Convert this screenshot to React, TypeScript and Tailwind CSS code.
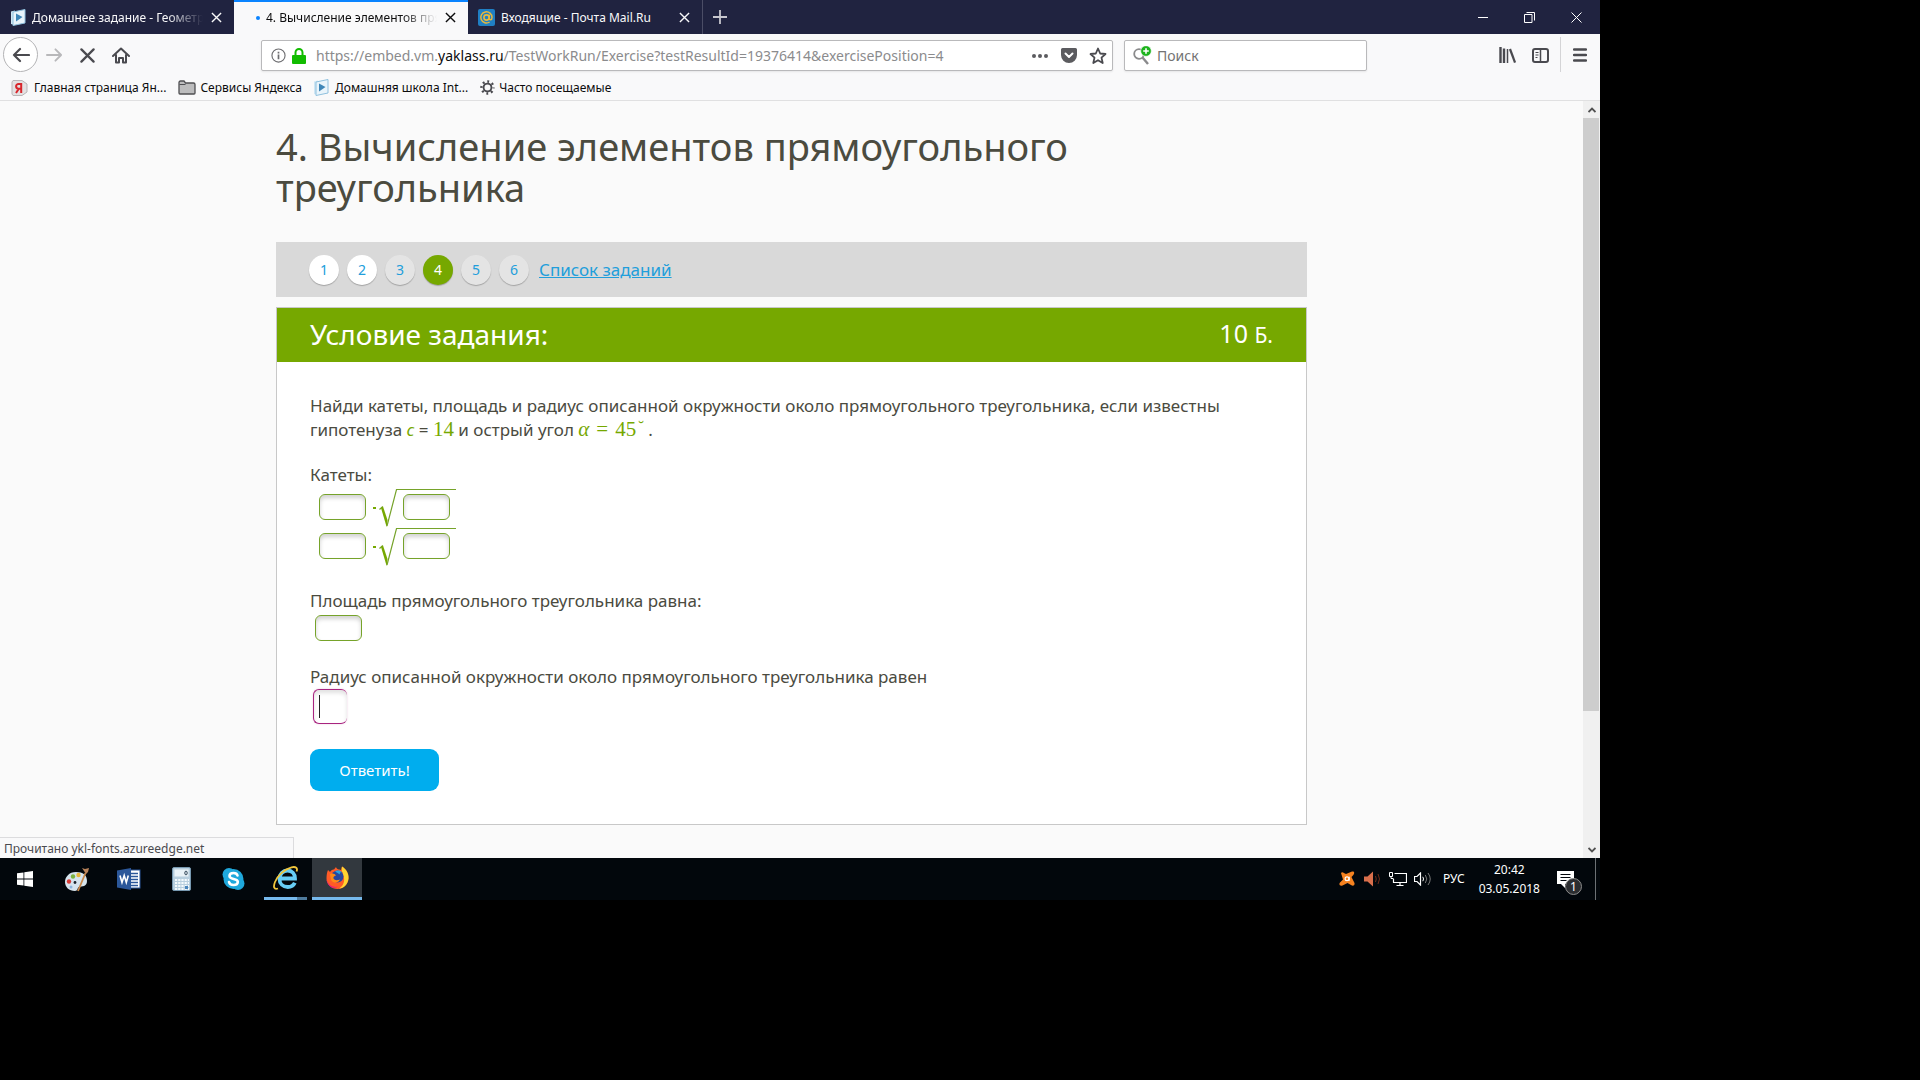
import type { ReactNode } from 'react';

function CloseIcon({ className }: { className: string }) {
  return (
    <svg viewBox="0 0 12 12" className={className} fill="none" stroke="currentColor" strokeWidth="1.5">
      <path d="M1 1 11 11M11 1 1 11" />
    </svg>
  );
}

function YaklassIcon() {
  return (
    <svg viewBox="0 0 16 17" className="h-[17px] w-4 shrink-0">
      <path d="M1 2.5 5 1.5V16L1 15Z" fill="#cfe6f4" />
      <path d="M3 3 15 .5V14L3 16.5Z" fill="#e9f4fb" stroke="#8fc0de" strokeWidth="1" />
      <path d="M6 4.5 12.5 8 6 12.5Z" fill="#3f86b8" />
    </svg>
  );
}

function MailIcon() {
  return (
    <svg viewBox="0 0 17 17" className="h-[17px] w-[17px] shrink-0">
      <rect width="17" height="17" rx="2" fill="#1f7fc4" />
      <circle cx="8.5" cy="8.5" r="2.6" fill="none" stroke="#e9b93c" strokeWidth="1.6" />
      <path d="M11.2 5.8v3.6c0 2 2.8 1.9 2.8-.9A5.6 5.6 0 1 0 11.6 13" fill="none" stroke="#e9b93c" strokeWidth="1.5" />
    </svg>
  );
}

function Tab({ title, icon, active, fade }: { title: string; icon: ReactNode; active?: boolean; fade?: boolean }) {
  return (
    <div
      className={
        active
          ? 'flex h-full w-[234px] shrink-0 items-center border-t-2 border-[#0a84ff] bg-[#f9f9fa] pr-[12px] pb-px pl-[22px] text-[#0c0c0d]'
          : 'flex h-full w-[234px] shrink-0 items-center pt-px pr-[12px] pl-[10px] text-[#f9f9fa]'
      }
    >
      {icon}
      <span
        className={
          fade
            ? 'ml-[6px] min-w-0 flex-1 overflow-hidden whitespace-nowrap [mask-image:linear-gradient(to_left,transparent,black_36px)]'
            : 'ml-[6px] min-w-0 flex-1 overflow-hidden whitespace-nowrap'
        }
      >
        {title}
      </span>
      <button aria-label="Закрыть вкладку" className="ml-[8px] p-0">
        <CloseIcon className="h-[11px] w-[11px]" />
      </button>
    </div>
  );
}

function TabStrip() {
  return (
    <div className="flex h-[34px] shrink-0 bg-[#202340] text-[12px]">
      <Tab title="Домашнее задание - Геометр" fade icon={<YaklassIcon />} />
      <Tab
        title="4. Вычисление элементов пря"
        active
        fade
        icon={<span className="h-1 w-1 shrink-0 rounded-full bg-[#0a84ff]" />}
      />
      <Tab title="Входящие - Почта Mail.Ru" icon={<MailIcon />} />
      <button aria-label="Новая вкладка" className="flex w-[35px] items-center justify-center border-l border-[#4b4d66] text-[#c7c7ce]">
        <svg viewBox="0 0 14 14" className="h-[14px] w-[14px]" stroke="currentColor" strokeWidth="1.8">
          <path d="M7 0v14M0 7h14" />
        </svg>
      </button>
      <div className="ml-auto flex text-white">
        <button aria-label="Свернуть" className="flex w-[47px] items-center justify-center">
          <span className="h-px w-[10px] bg-white" />
        </button>
        <button aria-label="Восстановить" className="flex w-[47px] items-center justify-center">
          <svg viewBox="0 0 11 11" className="h-[11px] w-[11px]" fill="none" stroke="currentColor">
            <path d="M.5 2.500h7.500v8h-7.500ZM2.500.5h8v8" />
          </svg>
        </button>
        <button aria-label="Закрыть" className="flex w-[47px] items-center justify-center">
          <svg viewBox="0 0 11 11" className="h-[11px] w-[11px]" fill="none" stroke="currentColor">
            <path d="M.5.5l10 10M10.500.5l-10 10" />
          </svg>
        </button>
      </div>
    </div>
  );
}

function NavButton({ label, children }: { label: string; children: ReactNode }) {
  return (
    <button aria-label={label} className="flex w-[33px] shrink-0 items-center justify-center">
      {children}
    </button>
  );
}

function Toolbar() {
  return (
    <div className="flex h-[42px] shrink-0 items-stretch pl-[3px] text-[#4a4a4f]">
      <button
        aria-label="Назад"
        className="mt-[3px] flex h-[35px] w-[35px] shrink-0 items-center justify-center rounded-full border border-[#b4b4b6] bg-white"
      >
        <svg viewBox="0 0 18 16" className="h-4 w-[18px]" fill="none" stroke="currentColor" strokeWidth="2.2" strokeLinecap="round" strokeLinejoin="round">
          <path d="M17 8H2M8 2 2 8l6 6" />
        </svg>
      </button>
      <NavButton label="Вперёд">
        <svg viewBox="0 0 18 16" className="h-4 w-[17px]" fill="none" stroke="#b8b8ba" strokeWidth="2" strokeLinecap="round" strokeLinejoin="round">
          <path d="M1 8h15M10 2l6 6-6 6" />
        </svg>
      </NavButton>
      <NavButton label="Остановить">
        <svg viewBox="0 0 16 16" className="h-[15px] w-[15px]" stroke="currentColor" strokeWidth="2.4" strokeLinecap="round">
          <path d="M1.500 1.500l13 13M14.500 1.500l-13 13" />
        </svg>
      </NavButton>
      <NavButton label="Домой">
        <svg viewBox="0 0 18 17" className="h-[17px] w-[18px]" fill="none" stroke="currentColor" strokeWidth="2" strokeLinecap="round" strokeLinejoin="round">
          <path d="M1 9 9 1.500 17 9" />
          <path d="M4 8v7.500h3V11h4v4.500h3V8" />
        </svg>
      </NavButton>
      <div className="max-w-[124px] min-w-2 flex-1" />
      <div className="mt-[6px] flex h-[31px] w-[852px] shrink items-center rounded-[2px] border border-[#b9b9bb] bg-white pr-[5px] pl-[9px] shadow-[0_1px_2px_rgba(0,0,0,0.08)]">
        <svg viewBox="0 0 16 16" className="h-[15px] w-[15px] shrink-0" fill="none" stroke="#6d6d70" strokeWidth="1.2">
          <circle cx="8" cy="8" r="7" />
          <path d="M8 7v5M8 4v1.800" strokeWidth="1.800" />
        </svg>
        <svg viewBox="0 0 14 16" className="ml-[6px] h-4 w-[14px] shrink-0">
          <path d="M3.500 8V4.500a3.500 3.500 0 0 1 7 0V8" fill="none" stroke="#12bc00" strokeWidth="2" />
          <rect y="7" width="14" height="9" rx="1" fill="#12bc00" />
        </svg>
        <span className="ml-[10px] min-w-0 flex-1 overflow-hidden text-[14px] whitespace-nowrap text-[#8b8b8d]">
          https://embed.vm.<span className="text-[#0c0c0d]">yaklass.ru</span>
          /TestWorkRun/Exercise?testResultId=19376414&amp;exercisePosition=4
        </span>
        <button aria-label="Действия на странице">
          <svg viewBox="0 0 16 4" className="h-1 w-4" fill="#5b5b5f">
            <circle cx="2" cy="2" r="2" />
            <circle cx="8" cy="2" r="2" />
            <circle cx="14" cy="2" r="2" />
          </svg>
        </button>
        <button aria-label="Сохранить в Pocket" className="ml-[13px]">
          <svg viewBox="0 0 16 15" className="h-[15px] w-4">
            <path d="M1.500 0h13A1.500 1.500 0 0 1 16 1.500V7A8 8 0 0 1 0 7V1.500A1.500 1.500 0 0 1 1.500 0Z" fill="#5b5b5f" />
            <path d="M4.500 5.500 8 9l3.500-3.500" fill="none" stroke="#fff" strokeWidth="2" strokeLinecap="round" strokeLinejoin="round" />
          </svg>
        </button>
        <button aria-label="Добавить в закладки" className="ml-[12px]">
          <svg viewBox="0 0 18 18" className="h-[18px] w-[18px]" fill="none" stroke="#4a4a4f" strokeWidth="1.800" strokeLinejoin="round">
            <path d="M9 1.500l2.200 5 5.300.5-4 3.600 1.200 5.400L9 13.200 4.300 16l1.200-5.400-4-3.600 5.300-.5Z" />
          </svg>
        </button>
      </div>
      <label className="mt-[6px] ml-[11px] flex h-[31px] w-[243px] shrink-0 items-center rounded-[2px] border border-[#b9b9bb] bg-white pl-[7px] shadow-[0_1px_2px_rgba(0,0,0,0.08)]">
        <svg viewBox="0 0 20 19" className="h-[19px] w-5 shrink-0">
          <circle cx="7" cy="8" r="4.800" fill="none" stroke="#8a8a8c" strokeWidth="1.800" />
          <path d="M10.500 11.500 16 18" stroke="#8a8a8c" strokeWidth="2.400" />
          <circle cx="14" cy="5" r="5.300" fill="#1db31d" stroke="#fff" strokeWidth=".6" />
          <path d="M14 2.200v5.600M11.200 5h5.600" stroke="#fff" strokeWidth="1.600" />
        </svg>
        <input
          aria-label="Поиск"
          placeholder="Поиск"
          className="ml-[5px] w-full min-w-0 bg-transparent text-[14px] text-[#0c0c0d] outline-none placeholder:text-[#737373]"
        />
      </label>
      <div className="min-w-2 flex-1" />
      <NavButton label="Библиотека">
        <svg viewBox="0 0 17 16" className="h-4 w-[17px]" stroke="currentColor">
          <path d="M1.500 0v16M5 1.500v14.500" strokeWidth="2.400" />
          <path d="M8.500 2v14" strokeWidth="1.500" />
          <path d="M11 2l5 13.500" strokeWidth="2.200" />
        </svg>
      </NavButton>
      <NavButton label="Боковая панель">
        <svg viewBox="0 0 17 15" className="h-[15px] w-[17px]" fill="none" stroke="currentColor">
          <rect x="1" y="1" width="15" height="13" rx="2" strokeWidth="2" />
          <path d="M8.500 1v13" strokeWidth="1.500" />
          <path d="M3.500 4.500h3M3.500 7h3M3.500 9.500h2" strokeWidth="1.200" />
        </svg>
      </NavButton>
      <div className="mt-[3px] ml-[3px] h-[35px] w-px bg-[#d4d4d6]" />
      <button aria-label="Меню" className="mr-1 ml-[3px] flex w-[32px] shrink-0 items-center justify-center">
        <svg viewBox="0 0 14 14" className="h-[14px] w-[14px]" stroke="currentColor" strokeWidth="2.400" strokeLinecap="round">
          <path d="M1 1.500h12M1 7h12M1 12.500h12" />
        </svg>
      </button>
    </div>
  );
}

function Bookmarks() {
  return (
    <nav className="flex h-[25px] shrink-0 items-center border-b border-[#e0e0e1] pb-px pl-[11px] text-[12px] text-[#0c0c0d]">
      <a href="#yandex" className="flex items-center gap-[6px]">
        <svg viewBox="0 0 17 16" className="h-4 w-[17px]">
          <path d="M2 .5h9L16 4v8l-5 3.500H2L1 14V2Z" fill="#e3e1e2" stroke="#b9b5b7" />
          <path d="M10.200 3v10M10 3.900H7.500a2.200 2.200 0 0 0 0 4.800H10M7.800 8.700 5 13" fill="none" stroke="#d8262c" strokeWidth="2" />
        </svg>
        Главная страница Ян...
      </a>
      <a href="#services" className="ml-[12px] flex items-center gap-1">
        <svg viewBox="0 0 18 15" className="h-[15px] w-[18px]">
          <path d="M1 13V2.500a1.500 1.500 0 0 1 1.500-1.500H6l1.500 2h8A1.500 1.500 0 0 1 17 4.500V13a1 1 0 0 1-1 1H2a1 1 0 0 1-1-1Z" fill="#bcbcbd" stroke="#4f4f52" strokeWidth="1.300" />
          <path d="M1.500 4.500h6" stroke="#4f4f52" />
        </svg>
        Сервисы Яндекса
      </a>
      <a href="#school" className="ml-[11px] flex items-center gap-[6px]">
        <YaklassIcon />
        Домашняя школа Int...
      </a>
      <a href="#frequent" className="ml-[12px] flex items-center gap-1">
        <svg viewBox="0 0 16 16" className="h-[15px] w-[15px]" fill="none" stroke="#4a4a4f">
          <circle cx="8" cy="8" r="4.200" strokeWidth="2" />
          <circle cx="8" cy="8" r="6.400" strokeWidth="2.600" strokeDasharray="2 3.026" strokeDashoffset="1" />
        </svg>
        Часто посещаемые
      </a>
    </nav>
  );
}

const TASKS = [
  { n: 1, style: 'bg-white text-[#219edb]' },
  { n: 2, style: 'bg-white text-[#219edb]' },
  { n: 3, style: 'bg-[#e4e4e4] text-[#219edb]' },
  { n: 4, style: 'bg-[#76a800] text-white' },
  { n: 5, style: 'bg-[#e4e4e4] text-[#219edb]' },
  { n: 6, style: 'bg-[#e4e4e4] text-[#219edb]' },
];

function Answer({ label }: { label: string }) {
  return (
    <input
      aria-label={label}
      className="block h-[26px] w-[47px] rounded-[6px] border border-[#76a32a] bg-white px-1 text-[16px] shadow-[inset_0_3px_4px_rgba(0,0,0,0.18)] outline-none"
    />
  );
}

function RootRow({ name }: { name: string }) {
  return (
    <div className="flex h-[39px] items-start pl-[9px]">
      <div className="pt-[7px]">
        <Answer label={`${name}: множитель`} />
      </div>
      <span className="mt-[20px] ml-[7px] h-[2px] w-[3px] bg-[#76a800]" />
      <svg viewBox="0 0 20 39" className="ml-[3px] h-[39px] w-5 shrink-0 overflow-visible">
        <path d="M.5 22.500 3.800 19.500" stroke="#76a32a" strokeWidth="1.200" />
        <path d="M2 21 4 19.500 8.500 33 8 39.500 7.500 39.500Z" fill="#76a800" />
        <path d="M8 39 17.500 2.500H20" fill="none" stroke="#76a32a" strokeWidth="1.200" />
      </svg>
      <div className="mt-[2px] border-t border-[#76a32a] pt-1 pr-[6px] pl-1">
        <Answer label={`${name}: под корнем`} />
      </div>
    </div>
  );
}

function Exercise() {
  return (
    <main className="mx-auto w-full max-w-[1031px] pt-[25px] text-[#4b4b3f]">
      <h1 className="max-w-[860px] text-[38px] leading-[41px]">4. Вычисление элементов прямоугольного треугольника</h1>
      <nav className="mt-[34px] flex h-[55px] items-center gap-2 bg-[#d9d9d9] pl-[33px] text-[14px]">
        {TASKS.map((t) => (
          <a
            key={t.n}
            href={`#task-${t.n}`}
            className={`flex h-[30px] w-[30px] items-center justify-center rounded-full shadow-[0_1px_1px_rgba(0,0,0,0.25)] ${t.style}`}
          >
            {t.n}
          </a>
        ))}
        <a href="#tasks" className="ml-[2px] text-[17px] text-[#219edb] underline">
          Список заданий
        </a>
      </nav>
      <section className="mt-[10px] border border-[#c8c8c8] bg-white">
        <header className="flex h-[54px] items-center justify-between bg-[#76a800] px-[33px] pb-[2px] text-white">
          <h2 className="text-[28px]">Условие задания:</h2>
          <p className="text-[25px]">
            10 <span className="text-[21px]">Б.</span>
          </p>
        </header>
        <form className="px-[33px] pt-[32px] pb-[33px] text-[17px] leading-6">
          <p className="max-w-[930px]">
            Найди катеты, площадь и радиус описанной окружности около прямоугольного треугольника, если известны гипотенуза{' '}
            <span className="text-[#76a800] italic">c</span> ={' '}
            <span className="font-['Liberation_Serif',serif] text-[21px] leading-none text-[#76a800]">14</span> и острый угол{' '}
            <span className="font-['Liberation_Serif',serif] text-[21px] leading-none text-[#76a800]">
              <i>α</i>
              <span className="mx-[7px]">=</span>45
            </span>
            <span className="ml-[2px] align-[4px] font-['Liberation_Serif',serif] leading-none text-[#76a800]">˘</span> .
          </p>
          <p className="mt-[21px]">Катеты:</p>
          <RootRow name="Первый катет" />
          <RootRow name="Второй катет" />
          <label className="mt-6 block">
            Площадь прямоугольного треугольника равна:
            <div className="h-[28px] pt-[2px] pl-[5px]">
              <Answer label="Площадь" />
            </div>
          </label>
          <label className="mt-6 block">
            Радиус описанной окружности около прямоугольного треугольника равен
            <div className="relative h-[35px] pl-[3px]">
              <input
                aria-label="Радиус"
                className="block h-[35px] w-[34px] rounded-[6px] border border-r-0 border-[#a8237f] bg-white px-1 shadow-[inset_0_3px_4px_rgba(0,0,0,0.12),0_0_2px_rgba(168,35,127,0.25)] outline-none"
              />
              <span className="absolute top-[6px] left-[9px] h-[23px] w-px bg-[#222]" />
            </div>
          </label>
          <button type="button" className="mt-[25px] block h-[42px] w-[129px] rounded-[9px] bg-[#00adee] text-[15px] text-white">
            Ответить!
          </button>
        </form>
      </section>
    </main>
  );
}

function Scrollbar() {
  return (
    <div className="flex w-[17px] shrink-0 flex-col bg-[#f0f0f0] text-[#505050]">
      <button aria-label="Прокрутить вверх" className="flex h-[17px] items-center justify-center">
        <svg viewBox="0 0 8 6" className="h-[6px] w-2" fill="none" stroke="currentColor" strokeWidth="1.800">
          <path d="M.5 5 4 1.500 7.500 5" />
        </svg>
      </button>
      <div className="flex-1">
        <div className="mr-px h-[82%] bg-[#cdcdcd]" />
      </div>
      <button aria-label="Прокрутить вниз" className="flex h-[17px] items-center justify-center">
        <svg viewBox="0 0 8 6" className="h-[6px] w-2" fill="none" stroke="currentColor" strokeWidth="1.800">
          <path d="M.5 1 4 4.500 7.500 1" />
        </svg>
      </button>
    </div>
  );
}

function TaskButton({ label, active, children }: { label: string; active?: boolean; children: ReactNode }) {
  return (
    <button
      aria-label={label}
      className={
        active
          ? 'flex h-full w-[50px] shrink-0 items-center justify-center border-b-[3px] border-[#76b9ed] bg-[#32383e]'
          : 'flex h-full w-[50px] shrink-0 items-center justify-center'
      }
    >
      {children}
    </button>
  );
}

function Taskbar() {
  return (
    <footer className="flex h-[42px] shrink-0 items-center gap-[2px] bg-[#02070c] text-[12px] text-white">
      <TaskButton label="Пуск">
        <svg viewBox="0 0 16 16" className="h-4 w-4" fill="#fff">
          <path d="M0 2.300 6.500 1.400v6.100H0ZM7.300 1.300 16 0v7.500H7.300ZM0 8.400h6.500v6.200L0 13.700ZM7.300 8.400H16V16l-8.700-1.300Z" />
        </svg>
      </TaskButton>
      <TaskButton label="Paint">
        <svg viewBox="0 0 26 25" className="h-[25px] w-[26px]">
          <path d="M12 5C5 5 1 10 1 15c0 5 4 9 10 9 3 0 2-3 4-4 3-1 8 0 8-6 0-6-4-9-11-9Z" fill="#d6e4ee" />
          <circle cx="5" cy="14.500" r="2.200" fill="#d83a35" />
          <circle cx="9" cy="9.500" r="2.200" fill="#7bb33f" />
          <circle cx="14.500" cy="8" r="2.200" fill="#e7b63c" />
          <circle cx="11" cy="15.500" r="1.400" fill="#1c242b" />
          <circle cx="7" cy="20" r="1.500" fill="#8db6de" />
          <path d="M21.500 6 14 24" stroke="#c98a4d" strokeWidth="1.800" />
          <path d="M18 1 21 2 25 1 24 5 22 7 20 4Z" fill="#b9835a" />
        </svg>
      </TaskButton>
      <TaskButton label="Word">
        <svg viewBox="0 0 24 22" className="h-[22px] w-6">
          <rect x="11" y="2" width="12" height="18" fill="#fff" stroke="#2b579a" />
          <path d="M14 5.500h7M14 8.500h7M14 11.500h7M14 14.500h7M14 17.500h7" stroke="#2b579a" strokeWidth="1.500" />
          <path d="M0 2.500 14 0v22L0 19.500Z" fill="#2b579a" />
          <path d="M3 7.500 5 14.500 7.200 7.500 9.300 14.500 11.300 7.500" fill="none" stroke="#fff" strokeWidth="1.600" />
        </svg>
      </TaskButton>
      <TaskButton label="Калькулятор">
        <svg viewBox="0 0 19 24" className="h-6 w-[19px]">
          <rect x=".5" y=".5" width="18" height="23" rx="1.500" fill="#b8cfdf" stroke="#7798b0" />
          <rect x="2.500" y="2.500" width="14" height="7" fill="#eaf3f8" />
          <ellipse cx="14" cy="6" rx="1.200" ry="1.900" fill="none" stroke="#33485a" />
          <path d="M3 13h14M3 16h14M3 19h14M3 22h14" stroke="#f4fafd" strokeWidth="2" strokeDasharray="2.200 1" />
          <path d="M13 19h3v3h-3Z" fill="#4a86bd" />
        </svg>
      </TaskButton>
      <TaskButton label="Skype">
        <svg viewBox="0 0 23 24" className="h-6 w-[23px]">
          <circle cx="7" cy="7.500" r="6.500" fill="#1fa8dc" />
          <circle cx="16" cy="16.500" r="6.500" fill="#1fa8dc" />
          <circle cx="11.500" cy="12" r="10" fill="#1fa8dc" />
          <path d="M15.500 8.500C15 6.500 13.500 6 11.500 6 9 6 7.500 7.200 7.500 9c0 4 8.300 1.800 8.300 5.800 0 2-1.800 3.200-4.300 3.200-2.200 0-4-.8-4.500-3" fill="none" stroke="#fff" strokeWidth="2.600" strokeLinecap="round" />
        </svg>
      </TaskButton>
      <div className="flex h-full w-[50px] shrink-0 flex-col items-center">
        <button aria-label="Internet Explorer" className="flex w-full flex-1 items-center justify-center">
          <svg viewBox="0 0 25 24" className="h-6 w-[25px]" fill="none">
            <path d="M7.500 12.500H22C22 8 19 4.500 14.500 4.500S6.500 8 6.500 12.700c0 5 3.500 8.300 8.300 8.300 3.200 0 5.800-1.500 7-4.200" stroke="#67cdf5" strokeWidth="3.800" />
            <path d="M5 22.500C1 24 0 21 2 16 5 9 12 3 18.500 1.300 23 .3 25 2 23.500 5.500" stroke="#f0c53c" strokeWidth="1.800" />
          </svg>
        </button>
        <span className="flex h-[3px] w-[43px] bg-[#76b9ed]">
          <span className="ml-auto w-[10px] bg-[#4e7b9e]" />
        </span>
      </div>
      <TaskButton label="Firefox" active>
        <svg viewBox="0 0 23 23" className="h-[23px] w-[23px]">
          <path d="M2 4 4 6C5 4 7 3.500 8 3.500L10 1C11 4 13 3 15 4l1-3.500C20 3 23 7.500 22.500 12.500 22 18.500 17.500 23 11.500 23S.5 18.500.5 12.500C.5 9 1 6 2 4Z" fill="#ff5b26" />
          <path d="M16 .5C20 3 23 7.500 22.500 12.500 22 18 18 22 13 22.800 18 19 19 15 17.500 10 17 7 15 5 16 .5Z" fill="#ffd431" />
          <circle cx="11.500" cy="10.500" r="6" fill="#28479d" />
          <path d="M9 5.500c2-1.500 5-1.500 7 1-2-.5-2.500.5-2 2" fill="#2ba4e4" />
          <path d="M4 8c3-1 5 0 6 1.500-2 .5-3 1.500-2.500 3C9 15 12 14 14 13.500 12.500 17.500 7 17.500 5 14Z" fill="#ff8a16" />
          <path d="M.5 13C2 20 8 22 12 20.500 7 24 1 20 .5 13Z" fill="#e31587" />
        </svg>
      </TaskButton>
      <div className="ml-auto flex h-full items-center">
        <svg viewBox="0 0 16 16" className="h-4 w-4" aria-label="Avast">
          <path d="M2 2C3.500 0 5 2.500 7 3L13 .5C16 0 16 3 12.500 6l3 6c.5 2.500-1.500 3.500-3.500 2L8.500 12 3.500 14.500C1 15.500-.5 13.500 1 11.500L4 8.500Z" fill="#f58220" />
          <circle cx="8" cy="7.800" r="1.900" fill="none" stroke="#fff" strokeWidth="1.200" />
          <path d="M10.200 5.800v4" stroke="#fff" strokeWidth="1.200" />
        </svg>
        <svg viewBox="0 0 16 16" className="ml-[9px] h-4 w-4">
          <path d="M0 5.500h3.500L9 .5v15L3.500 10.500H0Z" fill="#d96f4c" />
          <path d="M11.500 5q1.500 3 0 6M14 3q3 5 0 10" fill="none" stroke="#6e2a18" />
        </svg>
        <svg viewBox="0 0 18 15" className="ml-[9px] h-[15px] w-[18px]" fill="none" stroke="#fff">
          <path d="M5.500 1.500h12v9H4.500V7M11 10.500v3M7.500 13.500h7" strokeWidth="1.200" />
          <path d="M.5.500h3v4h-3ZM2 4.500v2h2.500" />
        </svg>
        <svg viewBox="0 0 18 14" className="ml-[7px] h-[14px] w-[18px]" fill="none" stroke="#fff">
          <path d="M.5 4.500h2.500L6.500 1v12L3 9.500H.5Z" strokeWidth="1.200" />
          <path d="M8.800 4.800q1.500 2.200 0 4.400" />
          <path d="M11.300 3q3 4 0 8M14 1q4.500 6 0 12" stroke="#777" />
        </svg>
        <span className="ml-[11px]">РУС</span>
        <div className="ml-[14px] text-center leading-[19px]">
          <p>20:42</p>
          <p>03.05.2018</p>
        </div>
        <button aria-label="Центр уведомлений" className="relative ml-[17px] flex h-full w-[38px] items-center">
          <svg viewBox="0 0 17 17" className="h-[17px] w-[17px]">
            <path d="M0 0h17v13H8v4l-4-4H0Z" fill="#fff" />
            <path d="M3.500 3.500h10M3.500 6.500h10M3.500 9.500h6" stroke="#02070c" strokeWidth="1.200" />
          </svg>
          <span className="absolute top-[20px] left-[8px] flex h-[17px] w-[17px] items-center justify-center rounded-full border border-[#8c8c8c] bg-[#2b2d30] text-[12px] leading-none">
            1
          </span>
        </button>
        <span className="mr-1 h-full w-px bg-[#6c7175]" />
      </div>
    </footer>
  );
}

export default function App() {
  return (
    <div className="h-screen overflow-hidden bg-black font-['Noto_Sans','Open_Sans',sans-serif]">
      <div className="flex h-5/6 w-5/6 flex-col bg-[#f9f9fa]">
        <TabStrip />
        <Toolbar />
        <Bookmarks />
        <div className="relative flex min-h-0 flex-1 bg-[#fafafa]">
          <div className="min-w-0 flex-1 overflow-hidden">
            <Exercise />
          </div>
          <Scrollbar />
          <p className="absolute bottom-0 left-0 h-[21px] w-[294px] border-t border-r border-[#dcdcde] bg-[#f9f9fa] pl-1 text-[12px] leading-[22px] text-[#4a4a4f]">
            Прочитано ykl-fonts.azureedge.net
          </p>
        </div>
        <Taskbar />
      </div>
    </div>
  );
}
